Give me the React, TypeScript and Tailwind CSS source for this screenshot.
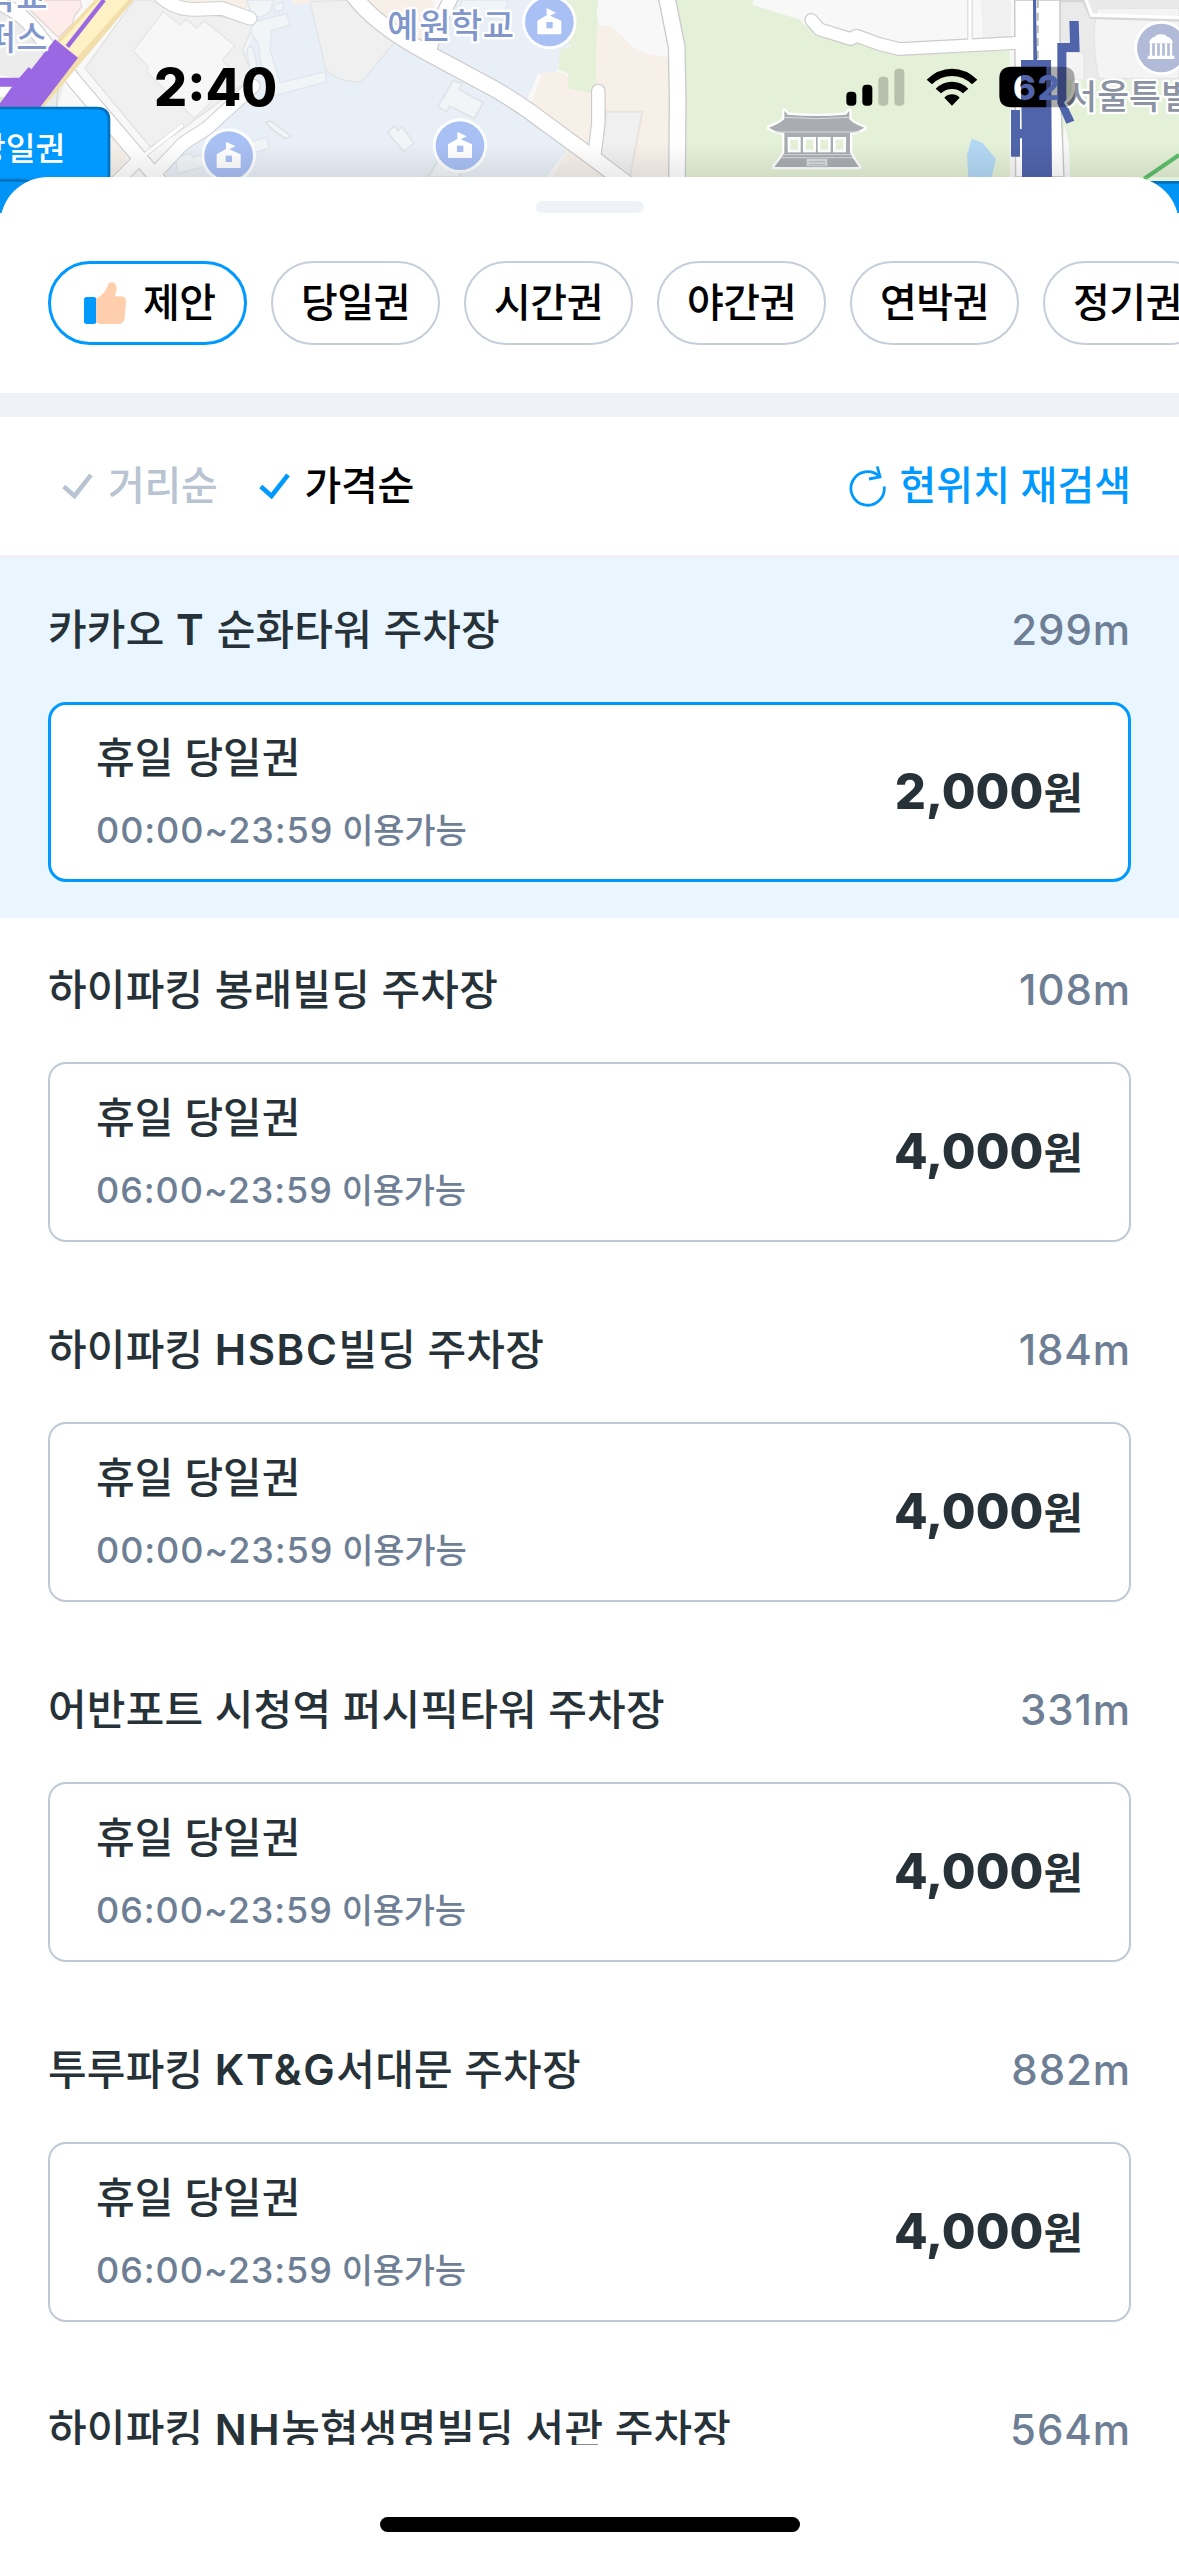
import type { ReactNode } from "react";

const KR = "font-['Inter','Noto_Sans_CJK_KR',sans-serif]";

const chips = ["당일권", "시간권", "야간권", "연박권", "정기권"];

const lots = [
  { name: "카카오 T 순화타워 주차장", distance: "299m", hours: "00:00~23:59", price: "2,000", selected: true },
  { name: "하이파킹 봉래빌딩 주차장", distance: "108m", hours: "06:00~23:59", price: "4,000" },
  { name: "하이파킹 HSBC빌딩 주차장", distance: "184m", hours: "00:00~23:59", price: "4,000" },
  { name: "어반포트 시청역 퍼시픽타워 주차장", distance: "331m", hours: "06:00~23:59", price: "4,000" },
  { name: "투루파킹 KT&G서대문 주차장", distance: "882m", hours: "06:00~23:59", price: "4,000" },
  { name: "하이파킹 NH농협생명빌딩 서관 주차장", distance: "564m", hours: "06:00~23:59", price: "4,000" },
];

type Lot = (typeof lots)[number];

const SchoolPin = ({ x, y }: { x: number; y: number }) => (
  <g transform={`translate(${x} ${y})`}>
    <circle fill="#fff" opacity="0.9" r="82" />
    <circle fill="#a9c0f4" r="73" />
    <path
      d="M-36 -4 L-8 -20 V-42 L20 -28 L2 -19 L36 -4 V34 Q36 37 33 37 H-33 Q-36 37 -36 34Z"
      fill="#fff"
    />
    <rect fill="#a9c0f4" height="19" width="19" x="-9" y="0" />
  </g>
);

const MapView = () => (
  <svg className="absolute top-0 left-0 h-[213px] w-[1179px]" viewBox="0 0 3537 639">
    <defs>
      <linearGradient id="sheetShadow" x1="0" x2="0" y1="0" y2="1">
        <stop offset="0" stopColor="#000" stopOpacity="0" />
        <stop offset="1" stopColor="#000" stopOpacity="0.08" />
      </linearGradient>
    </defs>
    <rect fill="#f8f8f8" height="639" width="3537" />

    {/* west blocks */}
    <g strokeLinejoin="round">
      <path d="M0 20 L75 60 L200 220 L170 340 H0Z" fill="#ececec" />
      <path d="M85 0 H240 L245 20 L225 45 L215 75 L175 112 L80 20Z" fill="#fdecea" stroke="#e5d6d8" strokeWidth="4" />
      <path d="M395 10 L255 205 L450 440 L530 400 L760 230 L728 150 L765 70 L640 45 L540 45 L450 0 H400Z" fill="#f0f0f0" stroke="#e2e2e2" strokeWidth="4" />
      <path d="M490 35 L540 75 L558 58 L590 85 L612 62 L705 137 L668 180 L700 220 L660 260 L625 315 L582 355 L440 215 L445 200 L400 152Z" fill="#f7f7f7" stroke="#e6e6e6" strokeWidth="4" />
      <path d="M745 0 H930 L980 215 L1080 245 L1200 90 L1300 100 L1690 0 V150 L1670 215 L1615 220 L1585 300 L1700 450 L1640 530 V639 H480 L500 510 L770 240 L735 160 L765 80Z" fill="#e8eff6" />
      <path d="M470 0 H750 L770 30 L660 15 L590 20 L520 20Z" fill="#f6f0e9" />
      <path d="M875 0 H1060 L940 10 L880 15Z" fill="#f6f0e9" />
      <path d="M930 5 L1060 0 L1190 120 L1085 245 Q1020 250 978 210Z" fill="#f0f0f0" stroke="#e2e5e8" strokeWidth="4" />
      <path d="M1080 0 H1300 V160 L1110 60Z" fill="#f6f0e9" />
      <path d="M1355 0 H1710 V140 L1675 150 L1668 215 L1610 222 L1585 290 L1310 150Z" fill="#e8eff6" />
      <path d="M740 0 H820 L810 35 L782 52 L755 45Z M820 18 L850 5 L848 30 L825 35Z" fill="#f1f5f8" stroke="#dfe6ec" strokeWidth="4" />
      <path d="M765 65 L860 40 L870 75 L815 92 L810 150 L840 248 L975 215 L980 245 L815 290 L785 215 L775 130 L750 95Z" fill="#f1f5f8" stroke="#dfe6ec" strokeWidth="4" />
      <path d="M740 145 L757 140 L775 210 L750 215Z" fill="#f1f5f8" stroke="#dfe6ec" strokeWidth="4" />
      <path d="M797 368 L812 363 L873 408 L858 416 L825 395Z" fill="#f1f5f8" stroke="#dadfe3" strokeWidth="4" />
      <path d="M525 475 L570 460 L580 472 L800 412 L808 445 L650 490 L535 520Z" fill="#f1f5f8" stroke="#dfe6ec" strokeWidth="4" />
      <path d="M1165 395 L1190 380 L1250 450 L1230 460Z" fill="#f1f5f8" stroke="#dadfe3" strokeWidth="4" />
      <path d="M330 400 L370 440 L380 480 L330 530Z" fill="#f6f0e9" />
    </g>

    {/* west roads */}
    <g fill="none" strokeLinecap="round">
      <g stroke="#cfcfcf">
        <path d="M0 10 Q60 35 105 90 L225 245 L450 510 L480 545" strokeWidth="48" />
        <path d="M335 555 L440 460 L545 378" strokeWidth="14" />
        <path d="M350 545 L410 485" strokeWidth="42" />
        <path d="M465 520 L550 430 L620 385 L760 258" strokeWidth="44" />
        <path d="M465 -30 Q510 30 590 28 L665 25 L750 55" strokeWidth="44" />
      </g>
      <g stroke="#fff">
        <path d="M0 10 Q60 35 105 90 L225 245 L450 510 L480 545" strokeWidth="41" />
        <path d="M335 555 L440 460 L545 378" strokeWidth="11" />
        <path d="M350 545 L410 485" strokeWidth="36" />
        <path d="M465 520 L550 430 L620 385 L760 258" strokeWidth="38" />
        <path d="M465 -30 Q510 30 590 28 L665 25 L750 55" strokeWidth="38" />
      </g>
    </g>
    <path d="M175 262 L168 325" stroke="#cfcfcf" strokeWidth="3" />
    <path d="M0 225 L70 240 L30 320 H0Z" fill="#fff" />
    <path d="M0 290 H14 L4 315 H0Z" fill="#dcebc7" />
    <path d="M284 0 H401 L128 325 H110 L225 165 L170 122Z" fill="#f2deaa" />
    <path d="M297 0 H385 L226 178 L176 132Z" fill="#fef1c4" />
    <path d="M312 0 L202 140" stroke="#9a68e2" strokeWidth="13" />
    <path d="M165 118 L234 173 L118 325 H0 V310 L36 260 H0 V233 H58 L86 201 L94 208Z" fill="#9a68e2" />

    {/* centre blocks */}
    <g transform="translate(1140 0)">
      <path d="M460 0 H760 V140 H650 V290 L560 265 L565 220 L535 210 L540 148 L575 140Z" fill="#e4f0d7" />
      <path d="M655 0 H850 V172 Q790 170 750 135 Q700 80 690 82 L655 76 L650 40Z" fill="#f8f8f8" />
      <path d="M650 78 H690 Q720 100 750 135 Q800 170 868 172 V560 H500 L560 455 L440 300 L475 220 L535 215 L565 228 V266 L648 282Z" fill="#f6f0e9" />
      <path d="M475 220 L485 222 L455 310 L440 300Z" fill="#f8f8f8" />
      <path d="M680 335 H787 L750 530 L660 465Z" fill="#f0f0f0" stroke="#e9e4e0" strokeWidth="6" />
      <path d="M0 200 L300 200 L560 455 L490 531 H0Z" fill="#e8eff6" />
      <path d="M0 0 V165 L35 130 L10 80Z" fill="#f0f0f0" />
      <path d="M220 242 L247 250 L237 268 L310 308 L283 355 L208 318 L200 335 L173 320Z" fill="#f1f5f8" stroke="#dfe4e8" strokeWidth="5" />
      <path d="M23 397 L43 378 L54 392 L67 380 L102 430 L72 455Z" fill="#f1f5f8" stroke="#dfe4e8" strokeWidth="5" />
      <path d="M145 531 L180 470 L260 480 L235 531Z" fill="#f1f5f8" stroke="#dfe4e8" strokeWidth="5" />
      <path d="M245 0 H385 L370 60 L240 40Z" fill="#eff4f8" stroke="#e0e7ed" strokeWidth="4" />
      <path d="M890 0 H2337 V600 H890Z" fill="#e4f0d7" />
      <g fill="none">
        <g stroke="#cbcbcb">
          <path d="M150 150 Q160 100 215 -10" strokeWidth="46" />
          <path d="M-85 -20 Q-20 70 130 152 L340 265 Q400 300 450 335 L640 475 L740 550" strokeWidth="52" />
          <path d="M642 475 L655 370 V273" strokeLinecap="round" strokeWidth="44" />
          <path d="M860 -10 L890 140 L893 300 L891 550" strokeWidth="54" />
        </g>
        <g stroke="#fff">
          <path d="M150 150 Q160 100 215 -10" strokeWidth="39" />
          <path d="M-85 -20 Q-20 70 130 152 L340 265 Q400 300 450 335 L640 475 L740 550" strokeWidth="45" />
          <path d="M642 475 L655 370 V273" strokeLinecap="round" strokeWidth="37" />
          <path d="M860 -10 L890 140 L893 300 L891 550" strokeWidth="46" />
        </g>
      </g>
    </g>

    {/* east blocks */}
    <g transform="translate(2337 0)">
      <path d="M-78 0 H710 V150 L365 155 L220 120 L120 95 L80 78 L60 58 L0 40 L-78 15Z" fill="#f8f8f8" />
      <path d="M605 0 H695 V110 H612Z" fill="#f0f0f0" />
      <path d="M692 150 H712 V531 H692Z" fill="#f6f6f4" />
      <path d="M840 0 H1200 V240 H850Z" fill="#eaeaea" />
      <path d="M955 25 H1200 V235 H960 Q935 120 955 25Z M862 158 H915 V240 H862Z" fill="#f4f4f4" stroke="#e0e0e0" strokeDasharray="5 3" strokeWidth="4" />
      <path d="M850 240 L1200 240 V545 H850Z" fill="#e4f0d7" />
      <path d="M855 370 Q875 430 873 531 H850Z" fill="#f8f8f8" />
      <path d="M578 416 L610 428 L651 478 L638 531 H568 L564 465Z" fill="#b3d8f4" />
      <g fill="none">
        <path d="M97 60 L122 88 L215 117 L232 107 L300 132 L362 147 L720 128" stroke="#cbcbcb" strokeLinecap="round" strokeLinejoin="round" strokeWidth="42" />
        <path d="M573 -5 V120" stroke="#d2d2d2" strokeWidth="16" />
        <path d="M97 60 L122 88 L215 117 L232 107 L300 132 L362 147 L730 128" stroke="#fff" strokeLinecap="round" strokeLinejoin="round" strokeWidth="35" />
        <path d="M573 -5 V120" stroke="#fff" strokeWidth="10" />
        <path d="M840 0 H915 L938 50 L1200 58" stroke="#d8d8d8" strokeWidth="14" />
        <path d="M920 -5 L938 45 L1200 53" stroke="#fff" strokeWidth="10" />
      </g>
      <path d="M707 0 H843 V240 L855 531 H710Z" fill="#fff" stroke="#c6c6c6" strokeWidth="4" />
      <path d="M700 111 V147 H712 V111Z" fill="#fff" />
      <path d="M776 0 V180" stroke="#b9b9b9" strokeDasharray="24 14" strokeWidth="6" />
      <path d="M762 0 H771 L774 180 H763Z M726 180 H816 L819 531 H729 V415 H723 V470 H696 V330 H723 V387 H728Z" fill="#5064ac" />
      <path d="M871 63 H899 L902 156 H862 V312 L886 362 L862 371 L835 310 V129 H873Z" fill="#5064ac" />
      <path d="M1095 537 L1200 465" stroke="#5fbe6c" strokeWidth="12" />

      {/* palace landmark */}
      <path
        d="M16 332 L26 344 Q113 352 201 344 L211 332 V358 Q225 372 256 383 Q235 396 213 398 V458 L220 472 L240 501 H-14 L8 472 L16 458 V398 Q-10 396 -30 383 Q0 372 16 358Z"
        fill="#a9adb2"
        paintOrder="stroke"
        stroke="#fff"
        strokeLinejoin="round"
        strokeWidth="14"
      />
      <path d="M16 352 Q113 360 211 352 M-14 396 H242 M10 464 H218 M4 473 H222" stroke="#d9dbdd" strokeWidth="3" fill="none" />
      <g fill="#e4f0d7" stroke="#fff" strokeWidth="8">
        <rect height="38" width="31" x="30" y="415" />
        <rect height="38" width="31" x="76" y="415" />
        <rect height="38" width="31" x="120" y="415" />
        <rect height="38" width="31" x="166" y="415" />
      </g>
      <path d="M82 475 H146 V500 H82Z M90 485 H138 M90 494 H138" fill="#d8dadb" stroke="#b4b8bc" strokeWidth="3" />

      {/* city hall pin */}
      <circle cx="1147" cy="144" fill="#fff" opacity="0.9" r="82" />
      <circle cx="1147" cy="144" fill="#b1bad7" r="73" />
      <path d="M1110 130 Q1112 113 1128 110 Q1132 103 1146 103 Q1160 103 1164 110 Q1180 113 1182 130Z M1106 167 H1186 V177 H1106Z" fill="#fff" />
      <path d="M1116 130 V168 M1131 130 V168 M1146 130 V168 M1161 130 V168 M1176 130 V168" stroke="#fff" strokeWidth="7" />
    </g>

    <SchoolPin x={686} y={467} />
    <SchoolPin x={1648} y={66} />
    <SchoolPin x={1380} y={437} />

    {/* labels */}
    <g
      className="font-['Noto_Sans_CJK_KR',sans-serif] font-medium"
      paintOrder="stroke"
      stroke="#fff"
      strokeLinejoin="round"
      strokeWidth="14"
    >
      <text fill="#8197cc" fontSize="102" x="-45" y="26">학교</text>
      <text fill="#8197cc" fontSize="102" x="-45" y="151">퍼스</text>
      <text fill="#8197cc" fontSize="102" textLength="380" x="1162" y="115">예원학교</text>
      <text fill="#8b93a3" fontSize="104" x="3196" y="328">서울특별시</text>
    </g>

    <rect fill="url(#sheetShadow)" height="101" width="3537" y="430" />

    {/* price tags sticking out from under the sheet */}
    <path d="M0 320 H290 Q331 320 331 360 V531 H0Z" fill="#0071bd" />
    <path d="M0 328 H288 Q323 328 323 363 V531 H0Z" fill="#0099ff" />
    <path d="M0 531 H331 V639 H0Z" fill="#0094f7" />
    <path d="M0 541 H60 Q95 541 110 560" fill="none" stroke="#0071bd" strokeWidth="8" />
    <text className="font-['Noto_Sans_CJK_KR',sans-serif] font-medium" fill="#fff" fontSize="97" x="-72" y="480">
      당일권
    </text>
    <path d="M3400 543 H3537 V639 H3400Z" fill="#0094f7" />
    <path d="M3400 547 H3537" stroke="#0071bd" strokeWidth="8" />
  </svg>
);

const StatusIcons = () => (
  <svg className="mr-[104px] h-[42px] w-[229px]" viewBox="200 199 687 126">
    <defs>
      <linearGradient gradientUnits="userSpaceOnUse" id="cutout" x1="700" x2="850" y1="0" y2="0">
        <stop offset="0.173" stopColor="#fff" />
        <stop offset="0.173" stopColor="#5064ac" />
      </linearGradient>
    </defs>
    <rect height="42" rx="12" width="30" x="201" y="276" />
    <rect height="63" rx="12" width="30" x="249" y="255" />
    <rect height="87" opacity="0.2" rx="12" width="30" x="297" y="231" />
    <rect height="111" opacity="0.2" rx="12" width="30" x="345" y="207" />
    <path d="M442 240 Q476 207 518 207 Q560 207 594 240 L578 254 Q552 229 518 229 Q484 229 458 254Z" />
    <path d="M469 267 Q490 246 518 246 Q546 246 567 267 L551 281 Q537 268 518 268 Q499 268 485 281Z" />
    <path d="M495 294 Q505 284 518 284 Q531 284 541 294 L518 318Z" />
    <path d="M696 201 H801 V323 H696 Q660 323 660 287 V237 Q660 201 696 201Z" />
    <path d="M801 201 H850 Q886 201 886 237 V287 Q886 323 850 323 H801Z" opacity="0.32" />
    <text
      className="font-['Inter',sans-serif] font-extrabold"
      fill="url(#cutout)"
      fontSize="104"
      textLength="140"
      x="701"
      y="300"
    >
      62
    </text>
  </svg>
);

const ThumbIcon = () => (
  <svg className="size-[42px]" viewBox="0 0 126 126">
    <rect fill="#0099ff" height="81" rx="8" width="37" y="45" />
    <path
      d="M36 50 C54 42 68 24 72 8 C75 -3 98 -2 98 18 C98 27 94 35 92 43 H110 Q126 43 126 58 L122 108 Q119 126 103 126 H50 Q40 126 36 119Z"
      fill="#ffcfad"
    />
  </svg>
);

const CheckIcon = ({ className }: { className: string }) => (
  <svg className={`h-[26px] w-[31px] ${className}`} fill="none" viewBox="0 0 31 26">
    <path d="M1.8 13.5 L12.5 23 L29 1.8" stroke="currentColor" strokeWidth="4.6" />
  </svg>
);

const RefreshIcon = () => (
  <svg className="h-[41px] w-[37px]" fill="none" viewBox="0 0 37 41">
    <path d="M30.5 10.6 A16.7 16.8 0 1 0 35.2 20.5" stroke="currentColor" strokeWidth="2.8" />
    <path d="M28.3 0.5 L31 11 L20 13" stroke="currentColor" strokeWidth="2.8" />
  </svg>
);

// Latin runs sit a little heavier and wider than the Hangul around them
const LotName = ({ children }: { children: string }) => (
  <h2 className="tracking-[0.2px]">
    {children.split(/([A-Z&]+)/).map((run, i) =>
      i % 2 ? (
        <span className="font-semibold tracking-[1.6px]" key={run}>
          {run}
        </span>
      ) : (
        run
      ),
    )}
  </h2>
);

const Chip = ({ children }: { children: ReactNode }) => (
  <button className="flex h-21 w-[169px] shrink-0 items-center justify-center rounded-full border-2 border-[#c5ceda] text-[40px] font-medium tracking-[-0.5px]">
    {children}
  </button>
);

const LotItem = ({ lot }: { lot: Lot }) => (
  <li className={`h-90 px-12 ${lot.selected ? "bg-[#e9f6ff]" : "bg-white"}`}>
    <div className="flex h-36 items-center justify-between pb-px text-[42px] font-medium">
      <LotName>{lot.name}</LotName>
      <span className="tracking-[0.9px] text-[#6e7f95]">{lot.distance}</span>
    </div>
    <div
      className={`flex h-45 items-center justify-between rounded-[18px] bg-white ${
        lot.selected ? "border-3 border-[#0099ff] px-[45px]" : "border-2 border-[#c0c9d6] px-[46px]"
      }`}
    >
      <div className="flex flex-col gap-4 pt-px">
        <p className="text-[42px] leading-[60px] font-medium">휴일 당일권</p>
        <p className="text-[34px] leading-[52px] font-medium tracking-[-0.2px] text-[#6e7f95]">
          <span className="text-[36px] tracking-[0.9px]">{lot.hours}</span> 이용가능
        </p>
      </div>
      <p className="flex items-baseline text-[43px] font-bold">
        <span className="text-[49px] font-extrabold">{lot.price}</span>원
      </p>
    </div>
  </li>
);

export default function App() {
  return (
    <div className={`flex h-[2556px] w-[1179px] flex-col overflow-hidden bg-white text-[#263238] ${KR}`}>
      <header className="relative h-[177px] shrink-0">
        <MapView />
        <div className="relative flex items-start justify-between pt-[66px] text-black">
          <span className="ml-[154px] text-[52px] leading-[44px] font-extrabold">2:40</span>
          <StatusIcons />
        </div>
      </header>

      <main className="relative flex flex-1 flex-col rounded-t-[48px] bg-white">
        <div className="mx-auto mt-6 h-3 w-27 rounded-full bg-[#eff3f7]" />

        <nav className="mt-12 flex gap-6 overflow-hidden pl-12 text-black">
          <button className="flex h-21 w-[199px] shrink-0 items-center gap-[17px] rounded-full border-3 border-[#0099ff] pl-[33px] text-[40px] font-medium tracking-[-0.5px]">
            <ThumbIcon />
            제안
          </button>
          {chips.map((label) => (
            <Chip key={label}>{label}</Chip>
          ))}
        </nav>

        <div className="mt-12 h-6 bg-[#eff3f7]" />

        <div className="flex h-[141px] items-center justify-between border-b-3 border-[#eff3f7] pr-12 pl-[62px] text-[40px] font-medium tracking-[-0.3px]">
          <div className="flex items-center gap-[41px]">
            <button className="flex items-center gap-[15px] text-[#b8c4d2]">
              <CheckIcon className="text-[#b8c4d2]" />
              거리순
            </button>
            <button className="flex items-center gap-[15px] text-black">
              <CheckIcon className="text-[#0099ff]" />
              가격순
            </button>
          </div>
          <button className="flex items-center gap-[14px] tracking-normal text-[#0099ff]">
            <RefreshIcon />
            현위치 재검색
          </button>
        </div>

        <ul className="h-[1887px] shrink-0 overflow-hidden">
          {lots.map((lot) => (
            <LotItem key={lot.name} lot={lot} />
          ))}
        </ul>

        <div className="mx-auto mt-18 h-[15px] w-[420px] shrink-0 rounded-full bg-black" />
      </main>
    </div>
  );
}
